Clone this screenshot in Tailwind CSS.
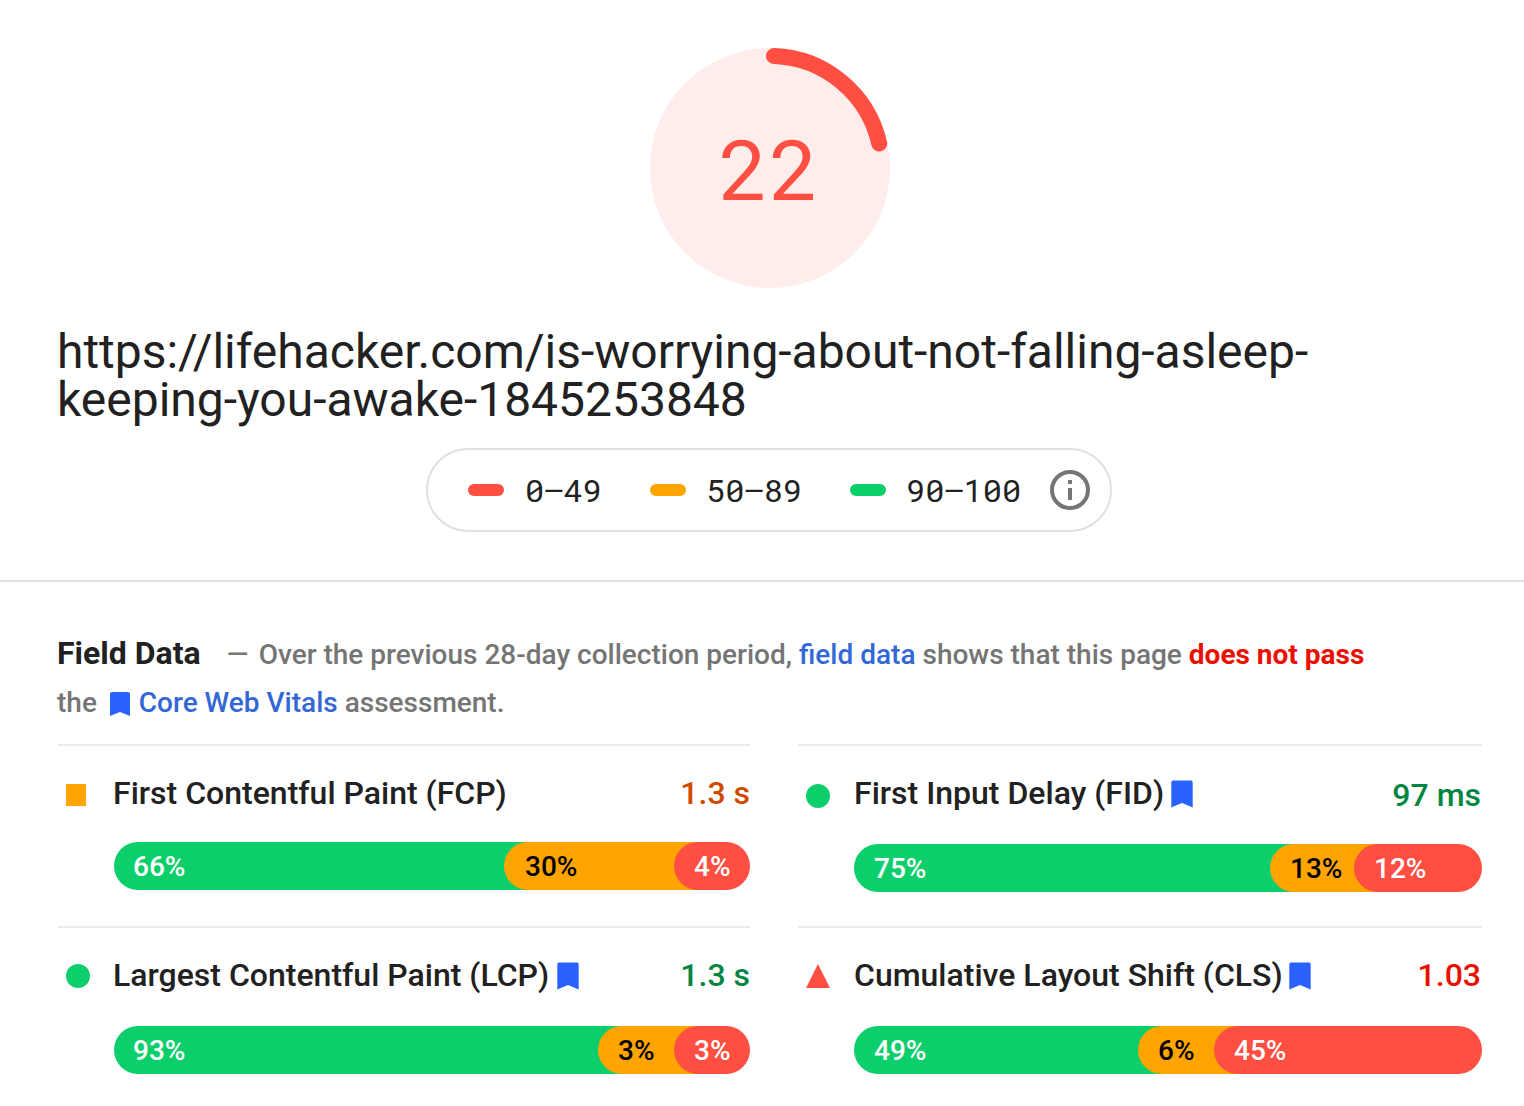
<!DOCTYPE html>
<html lang="en">
<head>
<meta charset="utf-8">
<title>Page speed report</title>
<script src="https://cdn.jsdelivr.net/npm/@tailwindcss/browser@4"></script>
</head>
<body class="w-[1524px] h-[1106px] overflow-hidden bg-white text-[#212121] font-['Roboto',sans-serif]">
<header class="flex flex-col items-center h-[582px] border-b-2 border-[#e0e0e0] pt-12">
  <!-- score gauge -->
  <svg class="block w-60 h-60 ml-4 shrink-0" viewBox="0 0 240 240">
    <circle cx="120" cy="120" r="120" fill="#ffedeb"/>
    <path d="M124 8.1A112 112 0 0 1 229.2 95.5" fill="none" stroke="#ff4e42" stroke-width="16" stroke-linecap="round"/>
    <text x="68.8" y="152" fill="#ff4e42" font-size="84" font-family="'Roboto Mono', Roboto, sans-serif">22</text>
  </svg>
  <h1 class="self-start ml-[57px] mt-10 text-[48px] leading-[48px] tracking-[-0.015px] whitespace-nowrap">https://lifehacker.com/is-worrying-about-not-falling-asleep-<br>keeping-you-awake-1845253848</h1>
  <!-- score scale -->
  <div class="mt-6 ml-[14px] w-[686px] h-[84px] border-2 border-[#e0e0e0] rounded-[42px] flex items-center pl-10 text-[32px] leading-[40px] font-['Roboto_Mono','Roboto',sans-serif]">
    <span class="w-9 h-3 rounded-full bg-[#ff4e42]"></span>
    <span class="ml-[21px] w-[125px]">0–49</span>
    <span class="w-9 h-3 rounded-full bg-[#ffa400]"></span>
    <span class="ml-5 w-[144px]">50–89</span>
    <span class="w-9 h-3 rounded-full bg-[#0cce6b]"></span>
    <span class="ml-5 w-[144px]">90–100</span>
    <svg class="w-10 h-10" viewBox="0 0 40 40"><circle cx="20" cy="20" r="18" fill="none" stroke="#757575" stroke-width="4"/><path d="M18 10h4v4h-4zM18 18h4v12h-4z" fill="#757575"/></svg>
  </div>
</header>
<main class="pl-[58px] pr-[42px] pt-[47px]">
  <p class="-ml-px h-[115px] text-[28px] leading-[48px] font-medium text-[#757575] whitespace-nowrap"><span class="text-[32px] font-bold text-[#212121] mr-[26px]">Field Data</span><span class="inline-block w-[32px]">—</span>Over the previous 28-day collection period, <a class="text-[#3367d6]">field data</a> shows that this page <b class="font-bold text-[#eb0f00]">does not pass</b><br>the <svg class="inline-block w-5 h-6 ml-[6px] mr-[9px] align-[-4px]" viewBox="0 0 20 24"><path d="M2 0H18Q20 0 20 2V24L10 20L0 24V2Q0 0 2 0Z" fill="#2962ff"/></svg><a class="text-[#3367d6]">Core Web Vitals</a> assessment.</p>
  <div class="grid grid-cols-[692px_684px] gap-x-12">
    <section class="h-[182px] border-t-2 border-[#ebebeb] pt-[27px]">
      <div class="flex h-10 items-center text-[32px] leading-10 font-medium">
        <span class="w-5 h-[22px] ml-2 mt-1 bg-[#ffa400]"></span><span class="ml-[27px]">First Contentful Paint (FCP)</span><span class="ml-auto text-[#d04900]">1.3 s</span>
      </div>
      <div class="mt-[29px] ml-14 h-12 flex text-[28px] leading-[50px] font-medium text-white">
        <span class="h-12 rounded-l-full bg-[#0cce6b] pl-[19px]" style="width:414px">66%</span>
        <span class="h-12 -ml-6 rounded-l-full bg-[#ffa400] pl-[21px] text-black" style="width:194px">30%</span>
        <span class="h-12 -ml-6 flex-1 rounded-full bg-[#ff4e42] pl-5">4%</span>
      </div>
    </section>
    <section class="h-[182px] border-t-2 border-[#ebebeb] pt-[27px]">
      <div class="flex h-10 items-center text-[32px] leading-10 font-medium">
        <span class="w-6 h-6 ml-2 mt-1.5 rounded-full bg-[#0cce6b]"></span><span class="ml-6">First Input Delay (FID)</span><svg class="w-[22px] h-7 ml-[7px] mt-0.5" viewBox="0 0 22 28"><path d="M2 .5H20Q21.7 .5 21.7 2.3V27.5L11 23L.3 27.5V2.3Q.3 .5 2 .5Z" fill="#2962ff"/></svg><span class="ml-auto mt-1 mr-px text-[#018642]">97 ms</span>
      </div>
      <div class="mt-[31px] ml-14 h-12 flex text-[28px] leading-[50px] font-medium text-white">
        <span class="h-12 rounded-l-full bg-[#0cce6b] pl-5" style="width:440px">75%</span>
        <span class="h-12 -ml-6 rounded-l-full bg-[#ffa400] pl-5 text-black" style="width:108px">13%</span>
        <span class="h-12 -ml-6 flex-1 rounded-full bg-[#ff4e42] pl-5">12%</span>
      </div>
    </section>
    <section class="h-[182px] border-t-2 border-[#ebebeb] pt-[27px]">
      <div class="flex h-10 items-center text-[32px] leading-10 font-medium">
        <span class="w-6 h-6 ml-2 mt-0.5 rounded-full bg-[#0cce6b]"></span><span class="ml-[23px]">Largest Contentful Paint (LCP)</span><svg class="w-[22px] h-7 ml-2 mt-0.5" viewBox="0 0 22 28"><path d="M2 .5H20Q21.7 .5 21.7 2.3V27.5L11 23L.3 27.5V2.3Q.3 .5 2 .5Z" fill="#2962ff"/></svg><span class="ml-auto text-[#018642]">1.3 s</span>
      </div>
      <div class="mt-[31px] ml-14 h-12 flex text-[28px] leading-[50px] font-medium text-white">
        <span class="h-12 rounded-l-full bg-[#0cce6b] pl-[19px]" style="width:508px">93%</span>
        <span class="h-12 -ml-6 rounded-l-full bg-[#ffa400] pl-5 text-black" style="width:100px">3%</span>
        <span class="h-12 -ml-6 flex-1 rounded-full bg-[#ff4e42] pl-5">3%</span>
      </div>
    </section>
    <section class="h-[182px] border-t-2 border-[#ebebeb] pt-[27px]">
      <div class="flex h-10 items-center text-[32px] leading-10 font-medium">
        <svg class="w-6 h-6 ml-2 mt-0.5" viewBox="0 0 24 24"><path d="M12 0L24 24H0Z" fill="#ff4e42"/></svg><span class="ml-6">Cumulative Layout Shift (CLS)</span><svg class="w-[22px] h-7 ml-1.5 mt-0.5" viewBox="0 0 22 28"><path d="M2 .5H20Q21.7 .5 21.7 2.3V27.5L11 23L.3 27.5V2.3Q.3 .5 2 .5Z" fill="#2962ff"/></svg><span class="ml-auto mr-px text-[#eb0f00]">1.03</span>
      </div>
      <div class="mt-[31px] ml-14 h-12 flex text-[28px] leading-[50px] font-medium text-white">
        <span class="h-12 rounded-l-full bg-[#0cce6b] pl-5" style="width:308px">49%</span>
        <span class="h-12 -ml-6 rounded-l-full bg-[#ffa400] pl-5 text-black" style="width:100px">6%</span>
        <span class="h-12 -ml-6 flex-1 rounded-full bg-[#ff4e42] pl-5">45%</span>
      </div>
    </section>
  </div>
</main>
</body>
</html>
